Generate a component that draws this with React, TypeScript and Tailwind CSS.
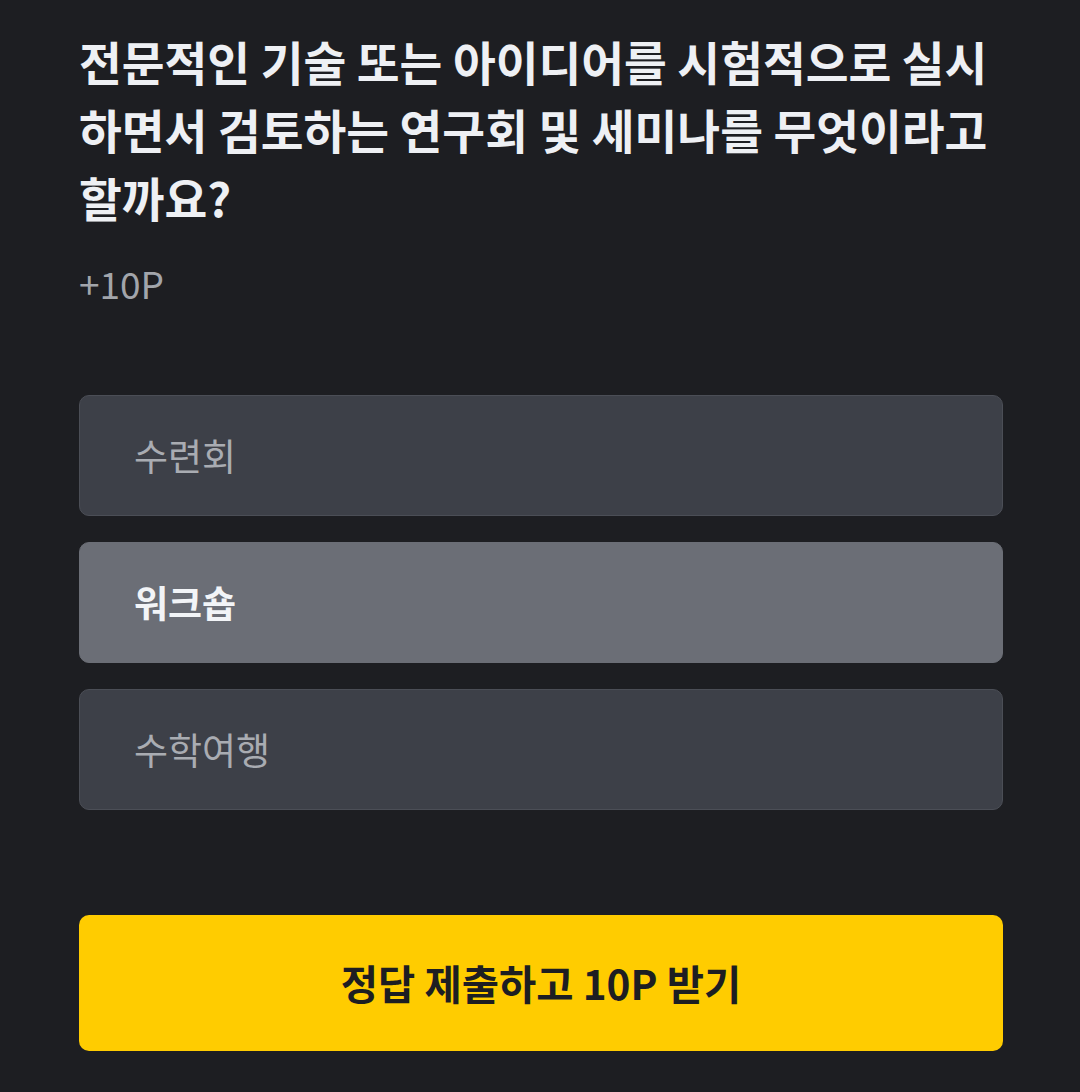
import React from "react";

const font = { fontFamily: '"Noto Sans CJK KR", "Noto Sans", sans-serif' };

export default function App() {
  const options = [
    { label: "수련회", selected: false },
    { label: "워크숍", selected: true },
    { label: "수학여행", selected: false },
  ];
  return (
    <div className="min-h-[1092px] w-[1080px] bg-[#1d1e22] pl-[79px] pr-[77px] pt-[27px]" style={font}>
      <h1 className="text-[46.5px] font-bold leading-[68px] text-[#eef0f4]">
        전문적인 기술 또는 아이디어를 시험적으로 실시하면서 검토하는 연구회 및 세미나를 무엇이라고 할까요?
      </h1>
      <p className="mt-[28px] text-[37px] leading-[48px] text-[#a2a5ab]">+10P</p>
      <div className="mt-[88px] flex flex-col gap-[26px]">
        {options.map((o) => (
          <div
            key={o.label}
            className={
              o.selected
                ? "flex h-[121px] items-center rounded-[10px] border border-[#6b6e76] bg-[#6b6e76] pl-[54px] text-[37px] font-bold text-[#f2f4f7]"
                : "flex h-[121px] items-center rounded-[10px] border border-[#4b4e56] bg-[#3d4048] pl-[54px] text-[37px] text-[#a9acb2]"
            }
          >
            {o.label}
          </div>
        ))}
      </div>
      <button className="mt-[105px] flex h-[136px] w-full items-center justify-center rounded-[10px] bg-[#ffcc00] text-[40.5px] font-bold text-[#1d1e22]">
        정답 제출하고 10P 받기
      </button>
    </div>
  );
}
